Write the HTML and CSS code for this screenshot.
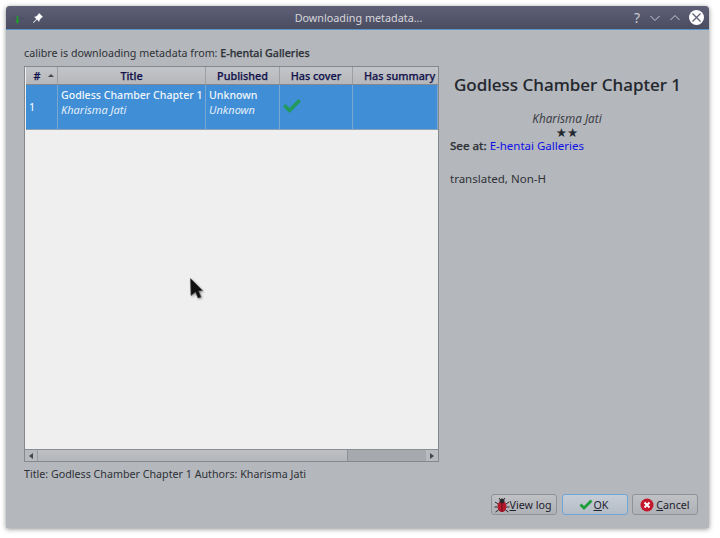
FILE: index.html
```html
<!DOCTYPE html>
<html>
<head>
<meta charset="utf-8">
<title>Downloading metadata...</title>
<link rel="stylesheet" href="styles.css">
</head>
<body>
<div class="window">
  <div class="titlebar">
    <div class="tb-left">
      <svg class="tb-icon" width="14" height="14" viewBox="0 0 14 14"><path d="M0 6.500C3 3 10 3 14 6.500C10 9.500 3 9.500 0 6.500Z" fill="#4f5266"/><path d="M6.500 4v5" stroke="#1fa32e" stroke-width="1.600"/><path d="M4.500 8.500h4L6.500 12Z" fill="#1fa32e"/></svg>
      <svg class="tb-pin" width="12" height="12" viewBox="0 0 12 12"><path d="M7 1l4 4-1.200.6-2.300 2.300-.3 2L5 7.600 1.500 11 1 10.500 4.400 7 2.100 4.800l2-.3L6.400 2.200Z" fill="#fff"/></svg>
    </div>
    <div class="tb-title">Downloading metadata...</div>
    <div class="tb-right">
      <span class="tb-help">?</span>
      <svg width="12" height="12" viewBox="0 0 12 12"><path d="M1.500 4L6 8.500 10.500 4" fill="none" stroke="#c9cad2" stroke-width="1"/></svg>
      <svg width="12" height="12" viewBox="0 0 12 12"><path d="M1.500 8L6 3.500 10.500 8" fill="none" stroke="#c9cad2" stroke-width="1"/></svg>
      <span class="tb-close"><svg width="15" height="15" viewBox="0 0 15 15"><path d="M3.500 3.500l8 8M11.500 3.500l-8 8" stroke="#5c5d73" stroke-width="1.200"/></svg></span>
    </div>
  </div>
  <div class="content">
    <div class="main">
      <div class="left">
        <div class="status">calibre is downloading metadata from: <b>E-hentai Galleries</b></div>
        <div class="table">
          <div class="thead">
            <div class="th c-num"><span>#</span><i class="sort"></i></div>
            <div class="th c-title">Title</div>
            <div class="th c-pub">Published</div>
            <div class="th c-cover">Has cover</div>
            <div class="th c-sum">Has summary</div>
          </div>
          <div class="row">
            <div class="td c-num num">1</div>
            <div class="td c-title"><b>Godless Chamber Chapter 1</b><em>Kharisma Jati</em></div>
            <div class="td c-pub"><b>Unknown</b><em>Unknown</em></div>
            <div class="td c-cover"><svg width="20" height="16" viewBox="0 0 20 16"><path d="M1 8.500L3.500 6 7.500 10 16.500 1 19 3.500 7.500 15Z" fill="#229a5c"/></svg></div>
            <div class="td c-sum"></div>
          </div>
          <div class="rest"></div>
          <div class="hscroll">
            <div class="sb-btn"><i class="arrow-l"></i></div>
            <div class="sb-thumb"></div>
            <div class="sb-track"></div>
            <div class="sb-btn"><i class="arrow-r"></i></div>
          </div>
        </div>
        <div class="summary">Title: Godless Chamber Chapter 1 Authors: Kharisma Jati</div>
      </div>
      <div class="detail">
        <h1>Godless Chamber Chapter 1</h1>
        <div class="author">Kharisma Jati</div>
        <div class="stars">★★</div>
        <div class="see"><b>See at:</b> <a href="#">E-hentai Galleries</a></div>
        <div class="tags">translated, Non-H</div>
      </div>
    </div>
    <div class="buttons">
      <button class="btn btn-log"><svg width="16" height="16" viewBox="0 0 16 16"><ellipse cx="8" cy="9.500" rx="4.500" ry="5.500" fill="#b3182b"/><circle cx="8" cy="4" r="2.500" fill="#2b2b30"/><path d="M8 5v10" stroke="#5c0d18" stroke-width=".8"/><path d="M1 5l3 2M15 5l-3 2M.5 10h3M15.500 10h-3M1.500 15l3-2M14.500 15l-3-2M5 1l1.500 2M11 1L9.500 3" stroke="#2b2b30" stroke-width="1"/></svg><span><u>V</u>iew log</span></button>
      <button class="btn btn-ok"><svg width="14" height="12" viewBox="0 0 14 12"><path d="M.5 6.500L2.500 4.500 5 7 11.500.5 13.500 2.500 5 11Z" fill="#1f9e3c"/></svg><span><u>O</u>K</span></button>
      <button class="btn btn-cancel"><svg width="14" height="14" viewBox="0 0 14 14"><circle cx="7" cy="7" r="6.500" fill="#c4162a"/><path d="M4.500 4.500l5 5M9.500 4.500l-5 5" stroke="#fff" stroke-width="2"/></svg><span><u>C</u>ancel</span></button>
    </div>
  </div>
</div>
<svg class="cursor" width="16" height="24" viewBox="0 0 16 24"><path d="M1.500 1.500L13.500 13.500 9.500 14 12 20 9 21 6.500 15 2 18.500Z" fill="#111" stroke="#444" stroke-width=".6"/></svg>
</body>
</html>
```
FILE: styles.css
```css
* { box-sizing: border-box; }
html, body { margin: 0; height: 100%; }
body {
  width: 720px;
  height: 538px;
  background: #fff;
  padding: 6px 11px 10px 6px;
  font-family: "Noto Sans", "Open Sans", sans-serif;
  font-size: 10.7px;
  color: #2e3237;
  overflow: hidden;
  position: relative;
}
.window {
  width: 703px;
  height: 522px;
  background: #b4b7bc;
  border-radius: 4px 4px 0 0;
  box-shadow: 0 1px 5px rgba(0,0,0,.45);
  display: flex;
  flex-direction: column;
}
.titlebar {
  height: 24px;
  flex: none;
  background: linear-gradient(#5f6077, #4a4c60);
  border-bottom: 1px solid #5a93c8;
  border-radius: 4px 4px 0 0;
  display: flex;
  align-items: center;
  padding: 0 5px 0 5px;
  color: #d6d7dc;
}
.tb-left { width: 150px; display: flex; align-items: center; gap: 7px; }
.tb-icon { margin-top: 2px; }
.tb-title { flex: 1; text-align: center; font-size: 10.8px; padding-left: 2px; }
.tb-right { width: 150px; display: flex; align-items: center; justify-content: flex-end; gap: 8px; }
.tb-help { font-size: 14px; color: #c9cad2; margin-right: 1px; }
.tb-close {
  width: 15px; height: 15px; background: #fff; border-radius: 50%;
  display: flex; margin-left: 0;
}
.content { flex: 1; display: flex; flex-direction: column; padding: 16px 11px 13px 18px; }
.main { flex: 1; display: flex; gap: 11px; }
.left { width: 415px; display: flex; flex-direction: column; }
.status { height: 20px; line-height: 15px; }
.status b { font-weight: 500; -webkit-text-stroke: .25px currentColor; }
.table {
  height: 396px;
  border: 1px solid #85888d;
  background: #efefef;
  display: flex;
  flex-direction: column;
  padding-left: 1px;
}
.thead {
  display: flex; height: 18px; flex: none;
  background: linear-gradient(#c3c5c9, #b5b7bb);
  border-bottom: 1px solid #85888d;
  color: #12124c;
  font-weight: 500;
  font-size: 10.8px;
  -webkit-text-stroke: .25px currentColor;
}
.th { display: flex; align-items: center; justify-content: center; border-right: 1px solid #9b9ea3; white-space: nowrap; line-height: 16px; }
.c-num { width: 32px; flex: none; position: relative; }
.c-title { width: 148px; flex: none; }
.c-pub { width: 74px; flex: none; }
.c-cover { width: 73px; flex: none; }
.c-sum { flex: 1; border-right: 0; }
.th.c-sum { padding-left: 8px; }
.th.c-num span { margin-right: 9px; }
.sort { position: absolute; right: 3px; top: 7px; border-left: 3px solid transparent; border-right: 3px solid transparent; border-bottom: 3px solid #45474f; }
.row { display: flex; height: 45px; flex: none; background: #3f8ed6; color: #fff; border-bottom: 1px solid #8aa3bb; }
.td { border-right: 1px solid #7ba6cf; padding: 3px 0 0 3px; display: flex; flex-direction: column; white-space: nowrap; }
.td b { font-weight: 500; color: #f2f7fc; font-size: 10.6px; line-height: 15px; }
.td em { color: #e4eefa; font-size: 11px; line-height: 14px; }
.td.num { justify-content: center; padding: 0 0 0 3px; }
.td.c-cover { padding: 13px 0 0 2px; }
.rest { flex: 1; }
.hscroll { height: 12px; flex: none; display: flex; background: #a6a9ae; border-top: 1px solid #8b8e93; margin-left: -1px; }
.sb-btn { width: 12px; flex: none; background: #b7babf; display: flex; align-items: center; justify-content: center; }
.sb-thumb { width: 311px; background: linear-gradient(#bec0c4, #b4b6ba); border-left: 1px solid #999ca1; border-right: 1px solid #8d9095; }
.sb-track { flex: 1; }
.arrow-l { border-top: 3px solid transparent; border-bottom: 3px solid transparent; border-right: 4px solid #44464c; }
.arrow-r { border-top: 3px solid transparent; border-bottom: 3px solid transparent; border-left: 4px solid #44464c; }
.summary { margin-top: 4px; line-height: 16px; }
.detail { flex: 1; display: flex; flex-direction: column; padding-right: 14px; font-size: 11.5px; }
h1 { margin: 27px 0 0; font-size: 17px; line-height: 24px; font-weight: 500; text-align: center; color: #23272e; white-space: nowrap; -webkit-text-stroke: .1px currentColor; padding-left: 1px; }
.author { margin-top: 14px; text-align: center; font-style: italic; line-height: 15px; font-size: 11.7px; color: #3c4046; }
.stars { text-align: center; line-height: 12px; height: 12px; font-size: 12.5px; font-family: "DejaVu Sans", sans-serif; color: #23272e; padding-top: 1px; }
.see { line-height: 16px; }
.see b { font-weight: 500; -webkit-text-stroke: .25px currentColor; }
.see a { color: #0f0fe6; text-decoration: none; }
.tags { margin-top: 17px; line-height: 16px; }
.buttons { display: flex; justify-content: flex-end; gap: 4px; height: 21px; flex: none; }
.btn {
  height: 21px;
  border: 1px solid #8f9297;
  border-radius: 3px;
  background: linear-gradient(#bfc1c5, #aeb1b5);
  font: inherit;
  color: #1e2230;
  padding: 0;
  display: flex;
  align-items: center;
  justify-content: center;
}
.btn-log { width: 66px; margin-right: 1px; padding-right: 3px; }
.btn-ok { width: 66px; border-color: #6ea6d9; background: linear-gradient(#c6cdd6, #b4bcc6); gap: 1px; padding-right: 3px; }
.btn-cancel { width: 66px; gap: 2px; }
.cursor { position: absolute; left: 189px; top: 277px; filter: drop-shadow(1px 1px 1px rgba(0,0,0,.4)); }
```
